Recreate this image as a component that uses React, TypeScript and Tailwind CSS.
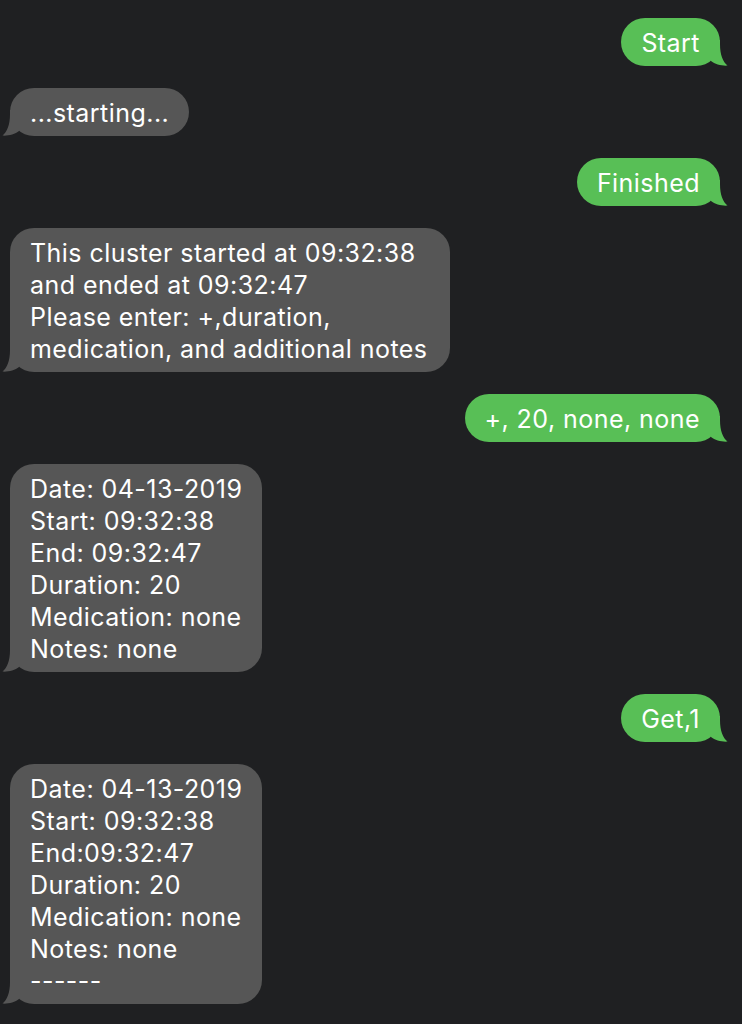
import React from "react";

type Msg = { from: "me" | "bot"; lines: string[]; width?: string };

const messages: Msg[] = [
  { from: "me", lines: ["Start"] },
  { from: "bot", lines: ["...starting..."] },
  { from: "me", lines: ["Finished"] },
  {
    from: "bot",
    lines: [
      "This cluster started at 09:32:38",
      "and ended at 09:32:47",
      "Please enter: +,duration,",
      "medication, and additional notes",
    ],
    width: "w-[440px]",
  },
  { from: "me", lines: ["+, 20, none, none"] },
  {
    from: "bot",
    lines: [
      "Date: 04-13-2019",
      "Start: 09:32:38",
      "End: 09:32:47",
      "Duration: 20",
      "Medication: none",
      "Notes: none",
    ],
  },
  { from: "me", lines: ["Get,1"] },
  {
    from: "bot",
    lines: [
      "Date: 04-13-2019",
      "Start: 09:32:38",
      "End:09:32:47",
      "Duration: 20",
      "Medication: none",
      "Notes: none",
      "------",
    ],
  },
];

// tail drawn for the right side, mirrored for the left
function Tail({ color, side }: { color: string; side: "left" | "right" }) {
  return (
    <svg
      width="28"
      height="26"
      viewBox="0 0 28 26"
      className={
        side === "right"
          ? "absolute bottom-0 right-[-8px]"
          : "absolute bottom-0 left-[-8px] -scale-x-100"
      }
    >
      <path
        d="M11 0 L20 0 L20 4 C20 15 23 22 27.5 25.6 C22 26 15 24.5 11 21 Z"
        fill={color}
      />
    </svg>
  );
}

function Bubble({ msg }: { msg: Msg }) {
  const mine = msg.from === "me";
  const color = mine ? "#58bf56" : "#565656";
  return (
    <div className={mine ? "flex justify-end" : "flex justify-start"}>
      <div
        className={`relative rounded-[24px] px-5 pt-[9px] pb-[7px] text-[25px] leading-8 tracking-[0.45px] text-white ${
          mine ? "bg-[#58bf56]" : "bg-[#565656]"
        } ${msg.width ?? ""}`}
      >
        {msg.lines.map((l, i) => (
          <div key={i} className="whitespace-nowrap">
            {l}
          </div>
        ))}
        <Tail color={color} side={mine ? "right" : "left"} />
      </div>
    </div>
  );
}

export default function App(): React.ReactNode {
  return (
    <main
      className="min-h-screen bg-[#1f2022] pl-[10px] pr-[22px] pt-[18px] pb-5 flex flex-col gap-[22px]"
      style={{ fontFamily: "Inter, 'Noto Sans', sans-serif" }}
    >
      {messages.map((m, i) => (
        <Bubble key={i} msg={m} />
      ))}
    </main>
  );
}
